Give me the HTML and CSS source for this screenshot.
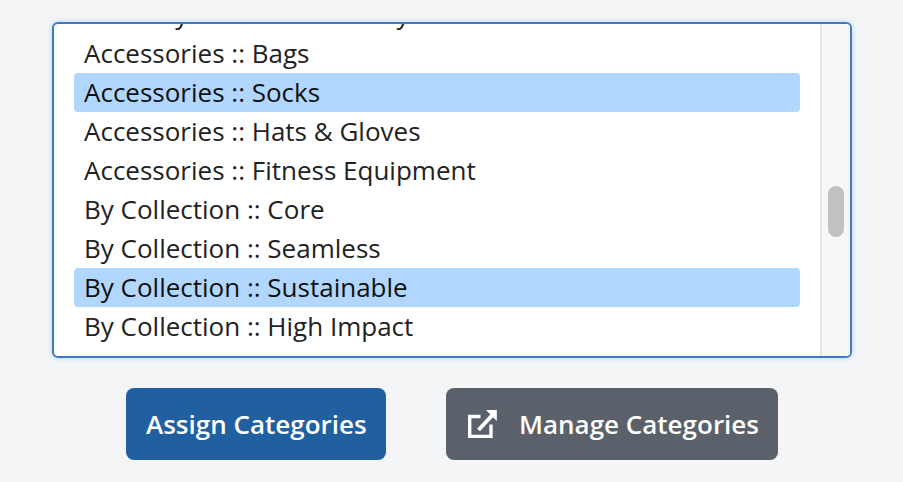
FILE: index.html
```html
<!DOCTYPE html>
<html lang="en">
<head>
    <meta charset="UTF-8">
    <title>Assign Categories</title>
    <link rel="stylesheet" href="styles.css">
</head>
<body>
<div class="picker">
    <div class="list">
        <div class="rows">
            <div class="item">Intensity Woven :: Intensity Tanks</div>
            <div class="item">Accessories :: Bags</div>
            <div class="item selected">Accessories :: Socks</div>
            <div class="item">Accessories :: Hats &amp; Gloves</div>
            <div class="item">Accessories :: Fitness Equipment</div>
            <div class="item">By Collection :: Core</div>
            <div class="item">By Collection :: Seamless</div>
            <div class="item selected">By Collection :: Sustainable</div>
            <div class="item">By Collection :: High Impact</div>
            <div class="item">By Collection :: Pro Essentials</div>
        </div>
        <div class="track">
            <div class="thumb"></div>
        </div>
    </div>
    <div class="actions">
        <button class="btn btn-assign">Assign Categories</button>
        <button class="btn btn-manage">
            <svg class="icon" viewBox="0 0 29 28" width="29" height="28">
                <path d="M12.500 6.500H1.700v20H23V14.500" fill="none" stroke="#fff" stroke-width="3.400"/>
                <path d="M10.500 20L24 5.500" fill="none" stroke="#fff" stroke-width="4"/>
                <path d="M18 0h10.800v11z" fill="#fff"/>
            </svg>
            Manage Categories
        </button>
    </div>
</div>
</body>
</html>
```

FILE: styles.css
```css
* {
    box-sizing: border-box;
    font-family: "Open Sans", sans-serif;
}

body {
    margin: 0;
    height: 482px;
    overflow: hidden;
    background-color: #f4f5f7;
}

.picker {
    padding: 22px 51px 0 52px;
}

.list {
    display: flex;
    height: 336px;
    overflow: hidden;
    background-color: #fff;
    border: 2px solid #3f7cbd;
    border-radius: 6px;
    box-shadow: 0 0 4px 1px #c3dcf5;
}

.rows {
    flex: 1;
    height: 361px;
    padding: 0 20px;
    margin-top: -29px;
}

.item {
    height: 39px;
    line-height: 39px;
    padding-left: 10px;
    font-size: 26px;
    color: #222;
    white-space: nowrap;
}

.selected {
    background-color: #b2d7ff;
    border-radius: 4px;
    color: #111;
}

.track {
    width: 30px;
    padding: 162px 0 0 6px;
    background-color: #f7f7f8;
    border-left: 2px solid #e4e4e4;
}

.thumb {
    width: 16px;
    height: 51px;
    background-color: #c1c1c1;
    border-radius: 8px;
}

.actions {
    display: flex;
    justify-content: center;
    gap: 60px;
    margin-top: 30px;
}

.btn {
    display: flex;
    align-items: center;
    height: 72px;
    padding: 0 22px;
    border: none;
    border-radius: 8px;
    color: #fff;
    font-size: 26px;
    font-weight: 600;
    white-space: nowrap;
}

.btn-assign {
    width: 260px;
    padding: 0 20px;
    background-color: #2160a0;
}

.btn-manage {
    width: 332px;
    background-color: #5a616a;
}

.icon {
    margin-right: 22px;
    flex-shrink: 0;
}
```
